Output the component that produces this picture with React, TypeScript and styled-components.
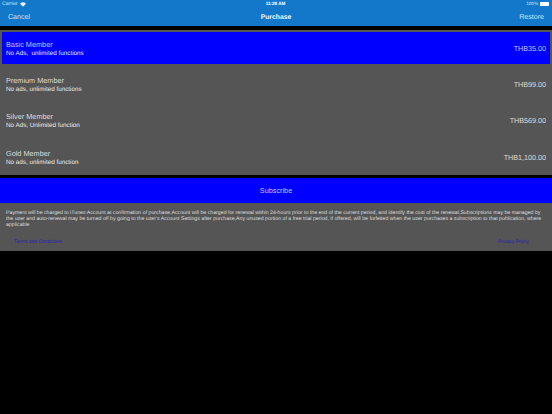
import React, { useState } from 'react';
import styled, { createGlobalStyle } from 'styled-components';

const GlobalStyle = createGlobalStyle`
  html, body {
    margin: 0;
    padding: 0;
    background: #000;
    font-family: "Liberation Sans", Arial, sans-serif;
    text-rendering: geometricPrecision;
  }
`;

const Page = styled.div`
  width: 552px;
  height: 414px;
  background: #000;
  overflow: hidden;
  display: flex;
  flex-direction: column;
`;

const Header = styled.header`
  height: 26px;
  background: #1378c9;
  color: #fff;
  display: flex;
  flex-direction: column;
  flex-shrink: 0;
`;

const StatusBar = styled.div`
  height: 8px;
  padding: 0 3px 0 2px;
  display: grid;
  grid-template-columns: 1fr auto 1fr;
  align-items: center;
  font-size: 4.6px;
  line-height: 8px;
`;

const Carrier = styled.div`
  display: flex;
  align-items: center;
  gap: 2px;
  font-size: 5.1px;
  color: #d5e6f5;
`;

const Time = styled.div`
  font-weight: 700;
`;

const Battery = styled.div`
  display: flex;
  justify-content: flex-end;
  align-items: center;
  gap: 2px;
  color: #d5e6f5;
`;

const BatteryBar = styled.span`
  width: 9px;
  height: 4px;
  background: #fff;
  border-radius: 0.5px;
`;

const NavBar = styled.div`
  flex: 1;
  display: grid;
  grid-template-columns: 1fr auto 1fr;
  align-items: center;
  padding: 0 8px;
  font-size: 7.1px;
`;

const NavButton = styled.span<{ $right?: boolean }>`
  color: #cfe3f5;
  text-align: ${({ $right }) => ($right ? 'right' : 'left')};
`;

const NavTitle = styled.span`
  font-weight: 700;
  font-size: 6.8px;
  color: #f2f7fc;
`;

const PlanList = styled.div`
  margin-top: 4px;
  height: 145px;
  flex-shrink: 0;
  background: #555;
  padding: 2px 2px 0;
  box-sizing: border-box;
  display: flex;
  flex-direction: column;
`;

const PlanRow = styled.div<{ $selected?: boolean }>`
  height: 32px;
  margin-bottom: 4.4px;
  flex-shrink: 0;
  box-sizing: border-box;
  padding: 0 4px;
  display: flex;
  align-items: center;
  justify-content: space-between;
  border-radius: 1px;
  cursor: pointer;
  background: ${({ $selected }) => ($selected ? '#0000fe' : 'transparent')};
  color: ${({ $selected }) => ($selected ? '#c4c4ff' : '#dcdcdc')};
`;

const PlanText = styled.div`
  display: flex;
  flex-direction: column;
  gap: 1px;
`;

const PlanName = styled.div`
  font-size: 7.3px;
  line-height: 9px;
`;

const PlanDesc = styled.div<{ $selected?: boolean }>`
  font-size: 6.3px;
  line-height: 7px;
  white-space: pre;
  color: ${({ $selected }) => ($selected ? '#e4e4ff' : '#ececec')};
`;

const PlanPrice = styled.div`
  font-size: 7.2px;
`;

const SubscribeButton = styled.button`
  margin-top: 3px;
  height: 25px;
  flex-shrink: 0;
  width: 100%;
  border: 0;
  padding: 0;
  background: #0000fe;
  color: #c4c4ff;
  font-family: inherit;
  font-size: 7.3px;
`;

const Footer = styled.div`
  height: 48px;
  flex-shrink: 0;
  background: #555;
  box-sizing: border-box;
  padding: 6.5px 8px 0 6px;
  display: flex;
  flex-direction: column;
`;

const Legal = styled.p`
  margin: 0;
  font-size: 5.22px;
  line-height: 6px;
  color: #dedede;
`;

const LinkRow = styled.div`
  margin-top: 12.5px;
  padding: 0 15px 0 8px;
  display: flex;
  justify-content: space-between;
  font-size: 4.95px;
  line-height: 6px;
  color: #2222b4;
`;

const plans = [
  { name: 'Basic Member', desc: 'No Ads,  unlimited functions', price: 'THB35.00' },
  { name: 'Premium Member', desc: 'No ads, unlimited functions', price: 'THB99.00' },
  { name: 'Silver Member', desc: 'No Ads, Unlimited function', price: 'THB569.00' },
  { name: 'Gold Member', desc: 'No ads, unlimited function', price: 'THB1,100.00' },
];

const WifiIcon = () => (
  <svg width="6" height="5" viewBox="0 0 12 9" fill="#e6f0fa">
    <path d="M6 9 0 2.8C3.4-.9 8.6-.9 12 2.8Z" />
  </svg>
);

export default function App() {
  const [selected, setSelected] = useState(0);

  return (
    <Page>
      <GlobalStyle />
      <Header>
        <StatusBar>
          <Carrier>
            Carrier <WifiIcon />
          </Carrier>
          <Time>11:28 AM</Time>
          <Battery>
            100% <BatteryBar />
          </Battery>
        </StatusBar>
        <NavBar>
          <NavButton>Cancel</NavButton>
          <NavTitle>Purchase</NavTitle>
          <NavButton $right>Restore</NavButton>
        </NavBar>
      </Header>
      <PlanList>
        {plans.map((plan, i) => (
          <PlanRow key={plan.name} $selected={i === selected} onClick={() => setSelected(i)}>
            <PlanText>
              <PlanName>{plan.name}</PlanName>
              <PlanDesc $selected={i === selected}>{plan.desc}</PlanDesc>
            </PlanText>
            <PlanPrice>{plan.price}</PlanPrice>
          </PlanRow>
        ))}
      </PlanList>
      <SubscribeButton>Subscribe</SubscribeButton>
      <Footer>
        <Legal>
          Payment will be charged to iTunes Account at confirmation of purchase,Account will be charged for renewal within 24-hours prior to the end of the current period, and identify the cost of the renewal,Subscriptions may be managed by the user and auto-renewal may be turned off by going to the user's Account Settings after purchase,Any unused portion of a free trial period, if offered, will be forfeited when the user purchases a subscription to that publication, where applicable
        </Legal>
        <LinkRow>
          <span>Terms and Conditions</span>
          <span>Privacy Policy</span>
        </LinkRow>
      </Footer>
    </Page>
  );
}
